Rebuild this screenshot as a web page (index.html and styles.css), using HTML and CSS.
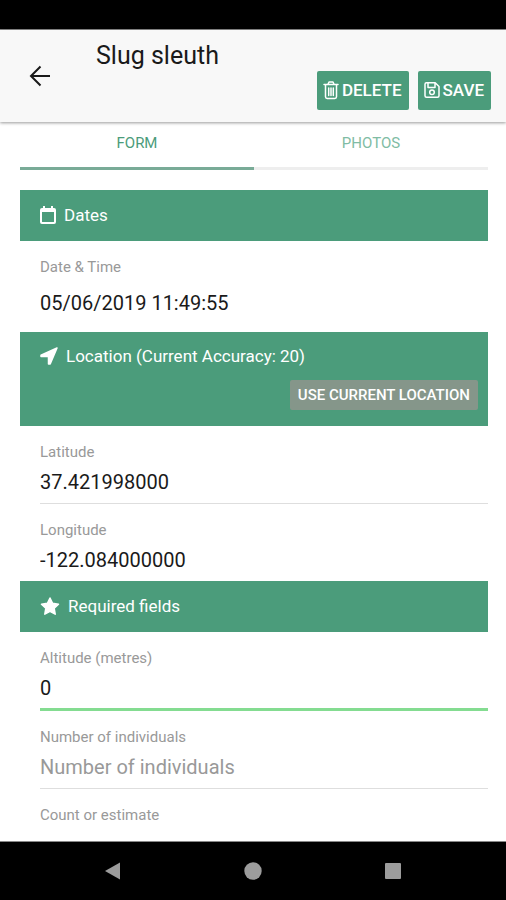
FILE: index.html
```html
<!DOCTYPE html>
<html lang="en">
<head>
<meta charset="utf-8">
<meta name="viewport" content="width=device-width, initial-scale=1">
<title>Slug sleuth</title>
<link rel="stylesheet" href="styles.css">
</head>
<body>
<div class="status-bar"></div>
<header class="app-header">
  <button class="back" type="button" aria-label="Back">
    <svg width="22" height="22" viewBox="0 0 22 22" fill="none" stroke="currentColor" stroke-width="2"><path d="M21 11H2.500M11.500 1.500 2 11l9.500 9.500"/></svg>
  </button>
  <div class="header-body">
    <h1 class="title">Slug sleuth</h1>
    <div class="actions">
      <button class="action" type="button">
        <svg width="16" height="20" viewBox="0 0 16 20" fill="none" stroke="currentColor" stroke-width="1.500" stroke-linecap="round" stroke-linejoin="round"><path d="M1 4.500h14M5 4.300l1-2.300h4l1 2.300M2.500 4.800v12q0 1.700 1.700 1.700h7.600q1.700 0 1.700-1.700v-12M5.700 8v7.500M8 8v7.500M10.300 8v7.500"/></svg>
        <span>DELETE</span>
      </button>
      <button class="action" type="button">
        <svg width="16" height="20" viewBox="0 0 16 20" fill="none" stroke="currentColor" stroke-width="1.500" stroke-linejoin="round"><path d="M2.500 2.800h8.700L15 6.500v9.300q0 1.500-1.500 1.500h-11Q1 17.300 1 15.800V4.300q0-1.500 1.500-1.500zM4 3v4.500h7V3"/><circle cx="8" cy="12.300" r="2.300"/></svg>
        <span>SAVE</span>
      </button>
    </div>
  </div>
</header>
<main class="content">
  <nav class="tabs">
    <a class="tab tab-active" href="#form">FORM</a>
    <a class="tab" href="#photos">PHOTOS</a>
  </nav>
  <form class="form" id="form">
    <h2 class="section">
      <svg width="16" height="18" viewBox="0 0 16 18"><path fill="currentColor" fill-rule="evenodd" d="M3 0h2v2h6V0h2v2h1q2 0 2 2v12q0 2-2 2H2q-2 0-2-2V4q0-2 2-2h1zM2 6v9.500q0 .500.500.500h11q.500 0 .500-.500V6z"/></svg>
      <span>Dates</span>
    </h2>
    <div class="field field-date">
      <label for="date">Date &amp; Time</label>
      <input id="date" type="text" value="05/06/2019 11:49:55">
    </div>
    <div class="section section-location">
      <h2 class="section-title">
        <svg width="18" height="18" viewBox="0 0 18 18"><path fill="currentColor" stroke="currentColor" stroke-width="1.500" stroke-linejoin="round" d="M17 1 1 8.300v1.200h7.500V17h1.700z"/></svg>
        <span>Location (Current Accuracy: 20)</span>
      </h2>
      <button class="locate" type="button">USE CURRENT LOCATION</button>
    </div>
    <div class="field">
      <label for="lat">Latitude</label>
      <input id="lat" type="text" value="37.421998000">
    </div>
    <div class="field field-last">
      <label for="lng">Longitude</label>
      <input id="lng" type="text" value="-122.084000000">
    </div>
    <h2 class="section">
      <svg width="20" height="19" viewBox="0 0 20 19"><path fill="currentColor" stroke="currentColor" stroke-width="1.500" stroke-linejoin="round" d="m10 1 2.600 5.300 5.900.900-4.300 4.100 1 5.900L10 14.400l-5.200 2.800 1-5.900L1.500 7.200l5.900-.900z"/></svg>
      <span>Required fields</span>
    </h2>
    <div class="field field-valid">
      <label for="alt">Altitude (metres)</label>
      <input id="alt" type="text" value="0">
    </div>
    <div class="field">
      <label for="num">Number of individuals</label>
      <input id="num" type="text" placeholder="Number of individuals">
    </div>
    <div class="field">
      <label for="count">Count or estimate</label>
      <input id="count" type="text">
    </div>
  </form>
</main>
<footer class="system-nav">
  <button type="button" aria-label="System back"><svg width="18" height="18" viewBox="0 0 18 18"><path fill="currentColor" d="M16 .500v17L1 9z"/></svg></button>
  <button type="button" aria-label="Home"><svg width="18" height="18" viewBox="0 0 18 18"><circle fill="currentColor" cx="9" cy="9" r="8.700"/></svg></button>
  <button type="button" aria-label="Recent apps"><svg width="18" height="18" viewBox="0 0 18 18"><rect fill="currentColor" x="1" y="1" width="16" height="16" rx="1"/></svg></button>
</footer>
</body>
</html>
```
FILE: styles.css
```css
* {
  box-sizing: border-box;
}

body {
  margin: 0;
  height: 100vh;
  display: flex;
  flex-direction: column;
  background: #fff;
  color: #1a1a1a;
  font-family: Roboto, sans-serif;
}

button,
input {
  margin: 0;
  padding: 0;
  border: 0;
  background: none;
  color: inherit;
  font-family: inherit;
}

svg {
  display: block;
  flex: none;
}

.status-bar {
  flex: none;
  height: 30px;
  background: #000;
  border-bottom: 1px solid #888;
}

.app-header {
  flex: none;
  display: flex;
  align-items: center;
  padding: 11px 15px 12px 29px;
  background: #f8f8f8;
  box-shadow: 0 1px 3px rgba(0, 0, 0, 0.4);
  z-index: 1;
}

.back {
  width: 67px;
}

.header-body {
  flex: 1;
}

.title {
  margin: 0;
  font-size: 25px;
  line-height: 30px;
  font-weight: 400;
}

.actions {
  display: flex;
  justify-content: flex-end;
  gap: 9px;
}

.action {
  display: flex;
  align-items: center;
  gap: 3px;
  height: 39px;
  padding: 0 7px 2px 6px;
  border-radius: 2px;
  background: #4b9c7b;
  color: #fff;
  font-size: 17px;
  font-weight: 500;
}

.content {
  flex: 1;
  min-height: 0;
  overflow: hidden;
  padding: 0 18px 0 20px;
}

.tabs {
  display: flex;
  margin-bottom: 20px;
}

.tab {
  flex: 1;
  height: 48px;
  padding-top: 11px;
  border-bottom: 3px solid #eee;
  color: #80bca4;
  font-size: 15px;
  line-height: 20px;
  text-align: center;
  text-decoration: none;
}

.tab-active {
  border-color: #79ab97;
  color: #4b9c7b;
}

.section {
  display: flex;
  align-items: center;
  gap: 8px;
  margin: 0;
  padding: 13px 20px 14px;
  background: #4b9c7b;
  color: #fff;
  font-size: 17px;
  line-height: 24px;
  font-weight: 400;
}

.section-location {
  flex-direction: column;
  align-items: stretch;
  gap: 12px;
  padding: 12px 10px 16px 20px;
}

.section-title {
  display: flex;
  align-items: center;
  gap: 8px;
  margin: 0;
  font-size: 17px;
  line-height: 24px;
  font-weight: 400;
}

.locate {
  align-self: flex-end;
  height: 30px;
  padding: 0 8px;
  border-radius: 2px;
  background: #85968a;
  color: #fff;
  font-size: 15px;
  font-weight: 500;
}

.field {
  display: flex;
  flex-direction: column;
  gap: 6px;
  margin-left: 20px;
  padding: 16px 0 7px;
  border-bottom: 1px solid #dedede;
}

.field label {
  color: #999;
  font-size: 15px;
  line-height: 20px;
}

.field input {
  width: 100%;
  height: 28px;
  font-size: 20px;
  outline: none;
}

.field input::placeholder {
  color: #999;
  opacity: 1;
}

.field-date {
  gap: 12px;
  padding-bottom: 15px;
  border-bottom: 0;
}

.field-last {
  border-bottom: 0;
}

.field-valid {
  padding-bottom: 6px;
  border-bottom: 3px solid #84dc91;
}

.system-nav {
  flex: none;
  display: flex;
  justify-content: center;
  gap: 122px;
  height: 59px;
  border-top: 1px solid #888;
  background: #000;
  color: #9c9c9c;
}
```
